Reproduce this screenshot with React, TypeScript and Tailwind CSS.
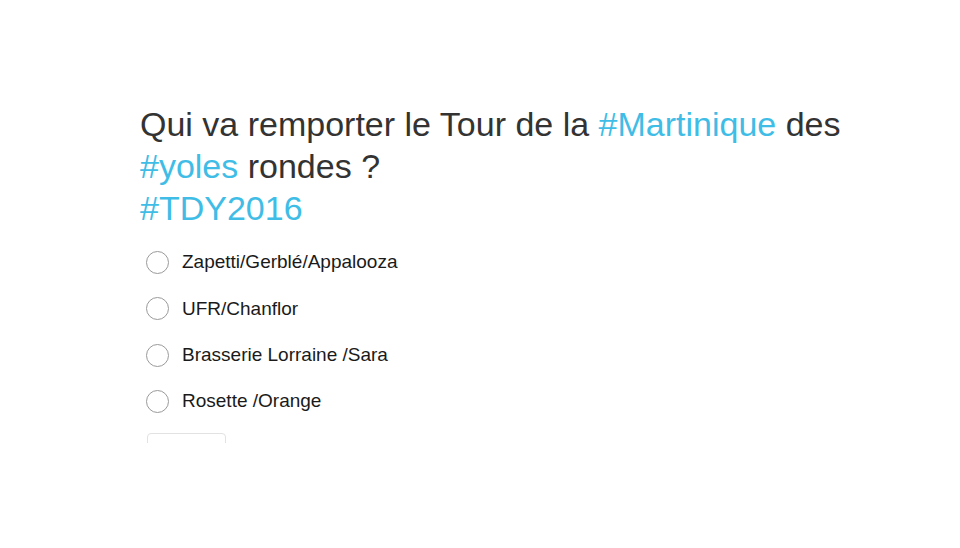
import React from 'react';

const options = ['Zapetti/Gerblé/Appalooza', 'UFR/Chanflor', 'Brasserie Lorraine /Sara', 'Rosette /Orange'];

const Tag: React.FC<{ children: React.ReactNode }> = ({ children }) => (
  <span className="text-[#3fbde6]">{children}</span>
);

export default function App() {
  return (
    <div className="w-[960px] h-[548px] bg-white font-['Liberation_Sans',Arial,sans-serif]">
      <div className="pl-[140px] pt-[103px] h-[443px] overflow-hidden">
        <h1 className="text-[34px] leading-[42px] text-[#333333] font-normal w-[720px]">
          Qui va remporter le Tour de la <Tag>#Martinique</Tag> des <Tag>#yoles</Tag> rondes ?
          <br />
          <Tag>#TDY2016</Tag>
        </h1>
        <div className="mt-[22px] flex flex-col gap-[23.4px] pl-[6px]">
          {options.map((o) => (
            <label key={o} className="flex items-center gap-[13px] h-[23px]">
              <span className="w-[23px] h-[23px] rounded-full border border-[#9a9a9a] bg-white" />
              <span className="text-[19px] text-[#1a1a1a]">{o}</span>
            </label>
          ))}
        </div>
        <div className="mt-[20px] ml-[7px] w-[79px] h-[40px] rounded-[4px] border border-[#e2e2e2]" />
      </div>
    </div>
  );
}
